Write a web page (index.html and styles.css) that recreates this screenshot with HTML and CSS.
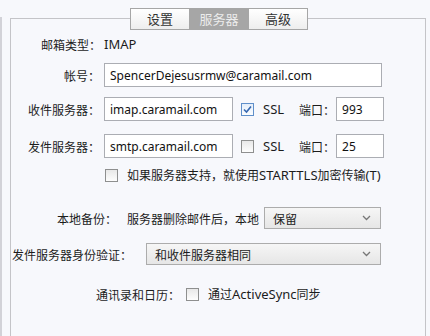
FILE: index.html
```html
<!DOCTYPE html>
<html>
<head>
    <meta charset="utf-8">
    <title>服务器</title>
    <link rel="stylesheet" href="styles.css">
</head>
<body>
    <div class="win">
        <div class="side"></div>
        <div class="main">
            <div class="tabs">
                <span class="tab">设置</span>
                <span class="tab on">服务器</span>
                <span class="tab">高级</span>
            </div>
            <div class="panel">
                <div class="row r-type"><span>邮箱类型：</span><span class="en type-val">IMAP</span></div>
                <div class="row r-acc">
                    <label class="lbl">帐号：</label>
                    <input class="ipt w-acc" type="text" value="SpencerDejesusrmw@caramail.com" />
                </div>
                <div class="row r-in">
                    <label class="lbl">收件服务器：</label>
                    <input class="ipt w-host" type="text" value="imap.caramail.com" />
                    <span class="chk on"><svg width="11" height="11" viewBox="0 0 11 11"><path d="M2 5.5 L4.5 8 L9 2.5" fill="none" stroke="#3567b0" stroke-width="1.6"/></svg></span>
                    <span class="en ssl">SSL</span>
                    <span class="port-lbl">端口：</span>
                    <input class="ipt w-port" type="text" value="993" />
                </div>
                <div class="row r-out">
                    <label class="lbl">发件服务器：</label>
                    <input class="ipt w-host" type="text" value="smtp.caramail.com" />
                    <span class="chk"></span>
                    <span class="en ssl">SSL</span>
                    <span class="port-lbl">端口：</span>
                    <input class="ipt w-port" type="text" value="25" />
                </div>
                <div class="row r-tls">
                    <span class="chk"></span>
                    <span class="tls-txt">如果服务器支持，就使用<span class="en">STARTTLS</span>加密传输<span class="en">(T)</span></span>
                </div>
                <div class="row r-bak">
                    <span>本地备份：</span>
                    <span class="bak-txt">服务器删除邮件后，本地</span>
                    <div class="sel w-bak"><span>保留</span><svg width="9" height="6" viewBox="0 0 9 6"><path d="M1 1 L4.5 4.5 L8 1" fill="none" stroke="#777" stroke-width="1.3"/></svg></div>
                </div>
                <div class="row r-auth">
                    <span>发件服务器身份验证：</span>
                    <div class="sel w-auth"><span>和收件服务器相同</span><svg width="9" height="6" viewBox="0 0 9 6"><path d="M1 1 L4.5 4.5 L8 1" fill="none" stroke="#777" stroke-width="1.3"/></svg></div>
                </div>
                <div class="row r-sync">
                    <span>通讯录和日历：</span>
                    <span class="chk"></span>
                    <span class="sync-txt">通过<span class="en">ActiveSync</span>同步</span>
                </div>
            </div>
        </div>
    </div>
</body>
</html>
```

FILE: styles.css
```css
html, body { margin: 0; padding: 0; }
body { background: #f7f8fc; font-family: "Noto Sans CJK SC", sans-serif; font-size: 12px; color: #1c1c1c; width: 430px; height: 336px; overflow: hidden; }
.win { display: flex; height: 336px; }
.side { width: 2px; margin-top: 17px; background: #d2d2d8; }
.main { flex: 0 0 416px; margin-left: 8px; display: flex; flex-direction: column; }
.tabs { display: flex; justify-content: center; margin-top: 8px; height: 22px; position: relative; z-index: 1; padding-left: 2px; }
.tab { width: 58px; height: 20px; line-height: 20px; text-align: center; font-size: 13px; color: #333; border: 1px solid #a6a6a6; background: linear-gradient(#ffffff, #eeeeee); }
.tab + .tab { border-left: none; }
.tab.on { background: #a6a6a6; color: #ececec; }
.panel { flex: 1; margin-top: -12px; border: 1px solid #c4c4c8; border-bottom: none; background: #f7f8fc; padding-top: 14px; }
.row { display: flex; align-items: center; }
.en { font-family: "Noto Sans", sans-serif; font-size: 13px; }
.r-type { height: 22px; padding-left: 30px; }
.type-val { margin-left: 3px; }
.lbl { width: 89px; text-align: right; margin-right: 4px; }
.r-acc { margin-top: 8px; height: 24px; }
.r-in { margin-top: 10px; height: 24px; }
.r-out { margin-top: 13px; height: 24px; }
.ipt { box-sizing: border-box; height: 24px; border: 1px solid #abadb3; background: #fff; font-family: "Noto Sans", sans-serif; font-size: 12px; color: #111; padding: 0 5px; margin: 0; outline: none; }
.w-acc { width: 278px; }
.w-host { width: 129px; }
.w-port { width: 48px; }
.chk { box-sizing: border-box; width: 13px; height: 13px; border: 1px solid #8e8f8f; background: linear-gradient(#e8e8e8, #fdfdfd); display: inline-flex; align-items: center; justify-content: center; flex: none; }
.chk.on { border-color: #5f8fca; background: linear-gradient(#e4eefa, #fbfdff); }
.r-in .chk, .r-out .chk { margin-left: 8px; }
.ssl { margin-left: 9px; width: 36px; }
.port-lbl { margin-right: 1px; }
.r-tls { margin-top: 7px; height: 20px; padding-left: 94px; }
.tls-txt { margin-left: 9px; }
.r-bak { margin-top: 22px; height: 22px; padding-left: 46px; }
.bak-txt { margin-left: 10px; margin-right: 5px; }
.sel { box-sizing: border-box; height: 22px; border: 1px solid #acacac; background: linear-gradient(#f6f6f6, #e6e6e6); display: flex; align-items: center; justify-content: space-between; padding: 0 9px 0 8px; font-size: 12px; }
.w-bak { width: 117px; }
.w-auth { width: 235px; margin-left: 14px; }
.r-auth { margin-top: 14px; height: 22px; padding-left: 1px; }
.r-sync { margin-top: 19px; height: 20px; padding-left: 85px; }
.r-sync .chk { margin-left: 6px; }
.sync-txt { margin-left: 9px; }
```
